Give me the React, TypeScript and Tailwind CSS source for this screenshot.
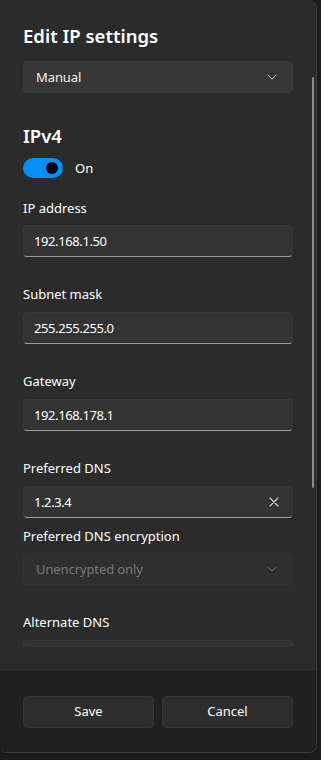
import React from 'react';

const font = { fontFamily: '"Noto Sans", "Open Sans", sans-serif' };

function Chevron({ className }: { className?: string }) {
  return (
    <svg width="10" height="6" viewBox="0 0 10 6" className={className} fill="none">
      <path d="M1 1l4 4 4-4" stroke="currentColor" strokeWidth="1" strokeLinecap="round" strokeLinejoin="round" />
    </svg>
  );
}

function Select({ value, disabled }: { value: string; disabled?: boolean }) {
  return (
    <div
      className={`h-8 w-[270px] rounded-[4px] flex items-center justify-between pl-3 pr-[15px] border ${
        disabled
          ? 'bg-[#2f2f2f] border-[#313131] text-[#787878]'
          : 'bg-[#373737] border-[#3b3b3b] text-[#f0f0f0]'
      }`}
    >
      <span className="text-[13px] leading-5 tracking-[-0.1px]">{value}</span>
      <Chevron className={disabled ? 'text-[#6a6a6a]' : 'text-[#c8c8c8]'} />
    </div>
  );
}

function Field({
  label,
  value,
  clear,
  labelGap = 'mb-2',
}: {
  label: string;
  value: string;
  clear?: boolean;
  labelGap?: string;
}) {
  return (
    <div>
      <p className={`text-[13px] leading-5 text-white ${labelGap}`}>{label}</p>
      <div className="h-8 w-[270px] rounded-[4px] bg-[#333333] border border-[#383838] border-b-[#9a9a9a] flex items-center justify-between pl-[10px] pr-[13px]">
        <span className="text-[13px] leading-5 tracking-[-0.4px] text-white">{value}</span>
        {clear && (
          <svg width="10" height="10" viewBox="0 0 10 10" fill="none">
            <path d="M1 1l8 8M9 1l-8 8" stroke="#d0d0d0" strokeWidth="1.1" strokeLinecap="round" />
          </svg>
        )}
      </div>
    </div>
  );
}

export default function App() {
  return (
    <div className="w-[321px] h-[760px] bg-[#1b1b1b] overflow-hidden" style={font}>
      <div className="relative w-[317px] h-[753px] flex flex-col rounded-r-lg rounded-bl-md border-r border-b border-[#3c3c3c] overflow-hidden">
        <div className="h-[671px] bg-[#2b2b2b] flex flex-col">
          <div className="h-[647px] overflow-hidden pl-[23px] pt-[22px]">
            <h1 className="text-[18.5px] leading-7 font-semibold text-white mb-[11px]">Edit IP settings</h1>
            <Select value="Manual" />
            <h2 className="text-[18.5px] leading-7 font-semibold text-white mt-[29px]">IPv4</h2>
            <div className="flex items-center gap-3 mt-2 h-5">
              <div className="w-10 h-5 rounded-full bg-[#0091f8] flex items-center justify-end pr-[5px]">
                <div className="w-3 h-3 rounded-full bg-black" />
              </div>
              <span className="text-[13px] leading-5 text-white">On</span>
            </div>
            <div className="flex flex-col gap-[27px] mt-5">
              <Field label="IP address" value="192.168.1.50" labelGap="mb-[7px]" />
              <Field label="Subnet mask" value="255.255.255.0" />
              <Field label="Gateway" value="192.168.178.1" />
              <div>
                <Field label="Preferred DNS" value="1.2.3.4" clear />
                <p className="text-[13px] leading-5 text-white mt-2 mb-[7px]">Preferred DNS encryption</p>
                <Select value="Unencrypted only" disabled />
              </div>
              <Field label="Alternate DNS" value="" />
            </div>
          </div>
        </div>
        <div className="flex-1 bg-[#202020] flex gap-2 pl-[23px] pt-[25px]">
          <button className="w-[131px] h-8 rounded-[4px] bg-[#2d2d2d] border border-[#353535] text-[13px] text-white">
            Save
          </button>
          <button className="w-[131px] h-8 rounded-[4px] bg-[#2d2d2d] border border-[#353535] text-[13px] text-white">
            Cancel
          </button>
        </div>
        <div className="absolute left-[312px] top-[77px] w-[2px] h-[411px] rounded-full bg-[#8a8a8a]" />
      </div>
    </div>
  );
}
